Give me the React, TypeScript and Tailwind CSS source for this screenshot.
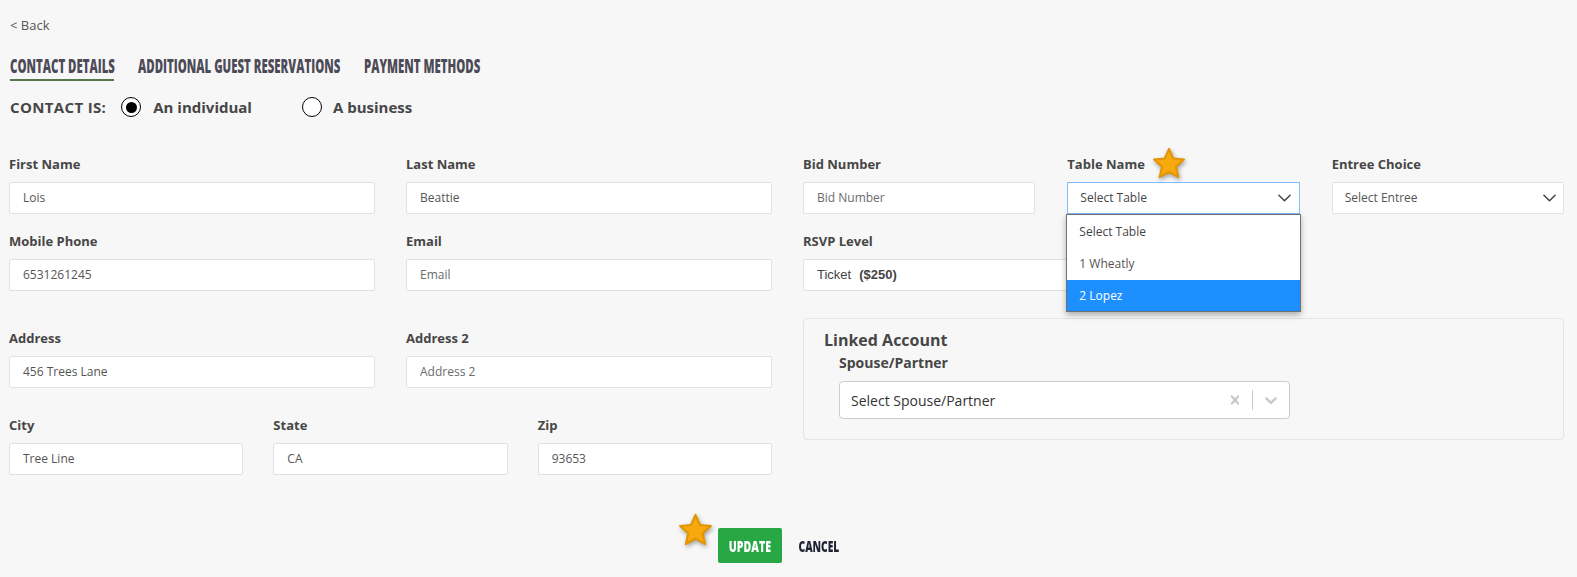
import React from "react";

const font = { fontFamily: '"Open Sans", "Liberation Sans", sans-serif' };

function Star({ className }: { className?: string }) {
  return (
    <svg viewBox="0 0 32 32" className={className} style={{ filter: "drop-shadow(1px 2px 2px rgba(0,0,0,0.35))" }}>
      <path
        d="M16 2.5 L19.9 11.2 L29.3 12.1 L22.2 18.4 L24.3 27.7 L16 22.9 L7.7 27.7 L9.8 18.4 L2.7 12.1 L12.1 11.2 Z"
        fill="#f7a90d"
        stroke="#e39400"
        strokeWidth="1.8"
        strokeLinejoin="round"
      />
    </svg>
  );
}

function Chevron({ className }: { className?: string }) {
  return (
    <svg viewBox="0 0 14 8" className={className} fill="none" stroke="currentColor" strokeWidth="1.6" strokeLinecap="round" strokeLinejoin="round">
      <path d="M1 1 L7 7 L13 1" />
    </svg>
  );
}

function Label({ children }: { children: React.ReactNode }) {
  return <div className="text-[13px] leading-[16px] font-bold text-[#464646] mb-[10px]">{children}</div>;
}

function Input({ value, placeholder }: { value?: string; placeholder?: string }) {
  return (
    <div className="h-[32px] bg-white border border-[#e2e2e2] rounded-[2px] flex items-center pl-[13px] text-[12px] text-[#555]">
      {value ? <span>{value}</span> : <span className="text-[#6b6b6b]">{placeholder}</span>}
    </div>
  );
}

function Field({ label, value, placeholder }: { label: string; value?: string; placeholder?: string }) {
  return (
    <div>
      <Label>{label}</Label>
      <Input value={value} placeholder={placeholder} />
    </div>
  );
}

function Radio({ checked }: { checked?: boolean }) {
  return (
    <span className="w-[20px] h-[20px] rounded-full border-[1.5px] border-black bg-white flex items-center justify-center">
      {checked && <span className="w-[11px] h-[11px] rounded-full bg-black" />}
    </span>
  );
}

function Tab({ w, active, children }: { w: string; active?: boolean; children: React.ReactNode }) {
  return (
    <div className={`${w} ${active ? "border-b-[2px] border-[#56784e]" : "border-b-[2px] border-transparent"} pb-[1px] whitespace-nowrap`}>
      <span className="inline-block origin-left scale-x-[0.6] -translate-y-[1px]">{children}</span>
    </div>
  );
}

export default function App() {
  return (
    <div className="h-[577px] overflow-hidden bg-[#f7f7f7] pl-[9px] pt-[17px]" style={font}>
      <div className="text-[13px] leading-[16px] text-[#555] pl-[1px]">&lt; Back</div>

      <div className="flex gap-[24px] mt-[23px] pl-[1px] text-[#4d4b57] text-[19px] leading-[22px] font-extrabold">
        <Tab w="w-[104px]" active>CONTACT DETAILS</Tab>
        <Tab w="w-[202px]">ADDITIONAL GUEST RESERVATIONS</Tab>
        <Tab w="w-[117px]">PAYMENT METHODS</Tab>
      </div>

      <div className="flex items-center mt-[14px] h-[24px] pl-[1px] text-[15px] font-bold text-[#464646]">
        <span className="tracking-[0.35px]">CONTACT IS:</span>
        <span className="ml-[15px] flex items-center gap-[12px]">
          <Radio checked />
          <span>An individual</span>
        </span>
        <span className="ml-[50px] flex items-center gap-[11px]">
          <Radio />
          <span>A business</span>
        </span>
      </div>

      <div className="flex gap-[31px] mt-[37px]">
        {/* left */}
        <div className="w-[763px] shrink-0">
          <div className="grid grid-cols-2 gap-x-[31px]">
            <Field label="First Name" value="Lois" />
            <Field label="Last Name" value="Beattie" />
          </div>
          <div className="grid grid-cols-2 gap-x-[31px] mt-[19px]">
            <Field label="Mobile Phone" value="6531261245" />
            <Field label="Email" placeholder="Email" />
          </div>
          <div className="grid grid-cols-2 gap-x-[31px] mt-[39px]">
            <Field label="Address" value="456 Trees Lane" />
            <Field label="Address 2" placeholder="Address 2" />
          </div>
          <div className="grid grid-cols-3 gap-x-[30px] mt-[29px]">
            <Field label="City" value="Tree Line" />
            <Field label="State" value="CA" />
            <Field label="Zip" value="93653" />
          </div>
        </div>

        {/* right */}
        <div className="w-[761px] shrink-0">
          <div className="grid grid-cols-3 gap-x-[32px]">
            <Field label="Bid Number" placeholder="Bid Number" />
            <div className="relative">
              <div className="relative">
                <Label>Table Name</Label>
                <Star className="absolute left-[84px] top-[-10px] w-[36px] h-[36px]" />
              </div>
              <div className="h-[32px] bg-white border border-[#80bdff] flex items-center justify-between pl-[12px] pr-[8px] text-[12px] text-[#444]">
                <span>Select Table</span>
                <Chevron className="w-[13px] h-[8px] text-[#444]" />
              </div>
              <div className="absolute left-[-1px] right-[-1px] top-[58px] z-10 bg-white border border-[#707070] shadow-[0_3px_6px_rgba(0,0,0,0.3)] text-[12px] pt-[1px]">
                <div className="h-[32px] flex items-center pl-[12px] text-[#444]">Select Table</div>
                <div className="h-[32px] flex items-center pl-[12px] text-[#555]">1 Wheatly</div>
                <div className="h-[31px] flex items-center pl-[12px] bg-[#1e8fff] text-white">2 Lopez</div>
              </div>
            </div>
            <div>
              <Label>Entree Choice</Label>
              <div className="h-[32px] bg-white border border-[#e2e2e2] rounded-[2px] flex items-center justify-between pl-[12px] pr-[7px] text-[12px] text-[#555]">
                <span>Select Entree</span>
                <Chevron className="w-[13px] h-[8px] text-[#444]" />
              </div>
            </div>
          </div>

          <div className="grid grid-cols-3 gap-x-[32px] mt-[19px]">
            <div className="col-span-2">
              <Label>RSVP Level</Label>
              <div className="h-[32px] bg-white border border-[#e2e2e2] rounded-[2px] flex items-center pl-[13px] text-[13px] text-[#444]" style={{ fontFamily: '"Liberation Sans", sans-serif' }}>
                <span>Ticket</span>
                <span className="ml-[8px] font-bold text-[#444]">($250)</span>
              </div>
            </div>
          </div>

          <div className="mt-[27px] border border-[#e4e4e4] rounded-[4px] pt-[11px] pb-[20px] pl-[20px] pr-[20px]">
            <div className="text-[16px] leading-[20px] font-bold text-[#464646]">Linked Account</div>
            <div className="pl-[15px] mt-[4px]">
              <div className="text-[14px] leading-[18px] font-bold text-[#464646]">Spouse/Partner</div>
              <div className="mt-[9px] w-[451px] h-[38px] bg-white border border-[#cccccc] rounded-[4px] flex items-center">
                <span className="flex-1 pl-[11px] text-[14px] text-[#333]">Select Spouse/Partner</span>
                <svg viewBox="0 0 20 20" className="w-[18px] h-[18px] text-[#c8c8c8] mr-[8px]" fill="currentColor">
                  <path d="M14.348 14.849c-0.469 0.469-1.229 0.469-1.697 0l-2.651-3.030-2.651 3.029c-0.469 0.469-1.229 0.469-1.697 0-0.469-0.469-0.469-1.229 0-1.697l2.758-3.15-2.759-3.152c-0.469-0.469-0.469-1.228 0-1.697s1.228-0.469 1.697 0l2.652 3.031 2.651-3.031c0.469-0.469 1.228-0.469 1.697 0s0.469 1.229 0 1.697l-2.758 3.152 2.758 3.15c0.469 0.469 0.469 1.229 0 1.698z" />
                </svg>
                <span className="w-px h-[20px] bg-[#cccccc]" />
                <span className="px-[8px] flex items-center">
                  <svg viewBox="0 0 20 20" className="w-[20px] h-[20px] text-[#c8c8c8]" fill="currentColor">
                    <path d="M4.516 7.548c0.436-0.446 1.043-0.481 1.576 0l3.908 3.747 3.908-3.747c0.533-0.481 1.141-0.446 1.574 0 0.436 0.445 0.408 1.197 0 1.615-0.406 0.418-4.695 4.502-4.695 4.502-0.217 0.223-0.502 0.335-0.787 0.335s-0.57-0.112-0.789-0.335c0 0-4.287-4.084-4.695-4.502s-0.436-1.17 0-1.615z" />
                  </svg>
                </span>
              </div>
            </div>
          </div>
        </div>
      </div>

      <div className="flex justify-center mt-[53px] pr-[13px]">
        <div className="relative flex items-center">
          <Star className="absolute left-[-41px] top-[-16px] w-[37px] h-[37px]" />
          <div className="w-[64px] h-[35px] bg-[#28a745] rounded-[2px] flex items-center justify-center text-white text-[16px] font-extrabold whitespace-nowrap">
            <span className="inline-block scale-x-[0.66]">UPDATE</span>
          </div>
          <div className="w-[74px] h-[35px] flex items-center justify-center text-[#1f2235] text-[16px] font-extrabold whitespace-nowrap">
            <span className="inline-block scale-x-[0.64]">CANCEL</span>
          </div>
        </div>
      </div>
    </div>
  );
}
